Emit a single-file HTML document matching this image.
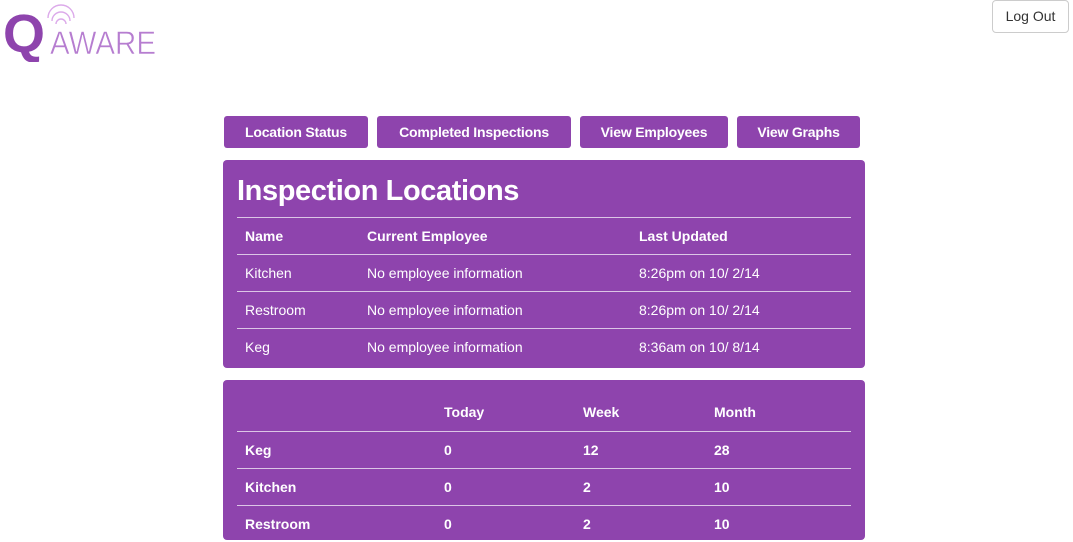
<!DOCTYPE html>
<html><head><style>
*{box-sizing:border-box;margin:0;padding:0}
body{width:1073px;height:528px;overflow:hidden;background:#fff;font-family:"Liberation Sans",sans-serif;position:relative}
.logout{position:absolute;left:992px;top:0;width:77px;height:33px;border:1px solid #ccc;border-radius:4px;font-size:14px;line-height:31px;text-align:center;color:#333;background:#fff}
.btn{position:absolute;top:116px;height:32px;background:#8e44ad;color:#fff;font-weight:bold;font-size:14px;line-height:32px;text-align:center;border-radius:3px;letter-spacing:-0.2px}
.panel{position:absolute;left:223px;width:642px;background:#8e44ad;border-radius:4px;color:#fff}
.panel h1{font-size:29px;font-weight:bold;position:absolute;left:14px;top:15px;letter-spacing:-0.4px}
.row{position:absolute;left:14px;width:614px;height:37px;border-top:1px solid #dcc6e6;font-size:14px;line-height:36px}
.row span{position:absolute;top:0}
.b{font-weight:bold}
</style></head><body>
<svg style="position:absolute;left:0;top:0" width="165" height="62" viewBox="0 0 165 62">
<text x="3" y="52" font-family="Liberation Sans" font-weight="bold" font-size="54" fill="#8e44ad" textLength="42" lengthAdjust="spacingAndGlyphs">Q</text>
<text x="50" y="54" font-family="Liberation Sans" font-size="32" fill="#b67dd0" stroke="#fff" stroke-width="0.6" textLength="106" lengthAdjust="spacingAndGlyphs">AWARE</text>
<g fill="none" stroke="#dcaaea" stroke-width="1.4">
<path d="M56 24 a5 5 0 0 1 10 0"/><path d="M52 21 a9 9 0 0 1 18 0"/><path d="M48 18 a13 13 0 0 1 26 0"/>
</g>
</svg>
<div class="logout">Log Out</div>
<div class="btn" style="left:224px;width:144px">Location Status</div>
<div class="btn" style="left:377px;width:194px">Completed Inspections</div>
<div class="btn" style="left:580px;width:148px">View Employees</div>
<div class="btn" style="left:737px;width:123px">View Graphs</div>
<div class="panel" style="top:160px;height:208px">
<h1>Inspection Locations</h1>
<div class="row b" style="top:57px"><span style="left:8px">Name</span><span style="left:130px">Current Employee</span><span style="left:402px">Last Updated</span></div>
<div class="row" style="top:94px"><span style="left:8px">Kitchen</span><span style="left:130px">No employee information</span><span style="left:402px">8:26pm on 10/ 2/14</span></div>
<div class="row" style="top:131px"><span style="left:8px">Restroom</span><span style="left:130px">No employee information</span><span style="left:402px">8:26pm on 10/ 2/14</span></div>
<div class="row" style="top:168px"><span style="left:8px">Keg</span><span style="left:130px">No employee information</span><span style="left:402px">8:36am on 10/ 8/14</span></div>
</div>
<div class="panel" style="top:380px;height:160px">
<div class="row b" style="top:14px;border-top:none"><span style="left:207px">Today</span><span style="left:346px">Week</span><span style="left:477px">Month</span></div>
<div class="row b" style="top:51px"><span style="left:8px">Keg</span><span style="left:207px">0</span><span style="left:346px">12</span><span style="left:477px">28</span></div>
<div class="row b" style="top:88px"><span style="left:8px">Kitchen</span><span style="left:207px">0</span><span style="left:346px">2</span><span style="left:477px">10</span></div>
<div class="row b" style="top:125px"><span style="left:8px">Restroom</span><span style="left:207px">0</span><span style="left:346px">2</span><span style="left:477px">10</span></div>
</div>
</body></html>
